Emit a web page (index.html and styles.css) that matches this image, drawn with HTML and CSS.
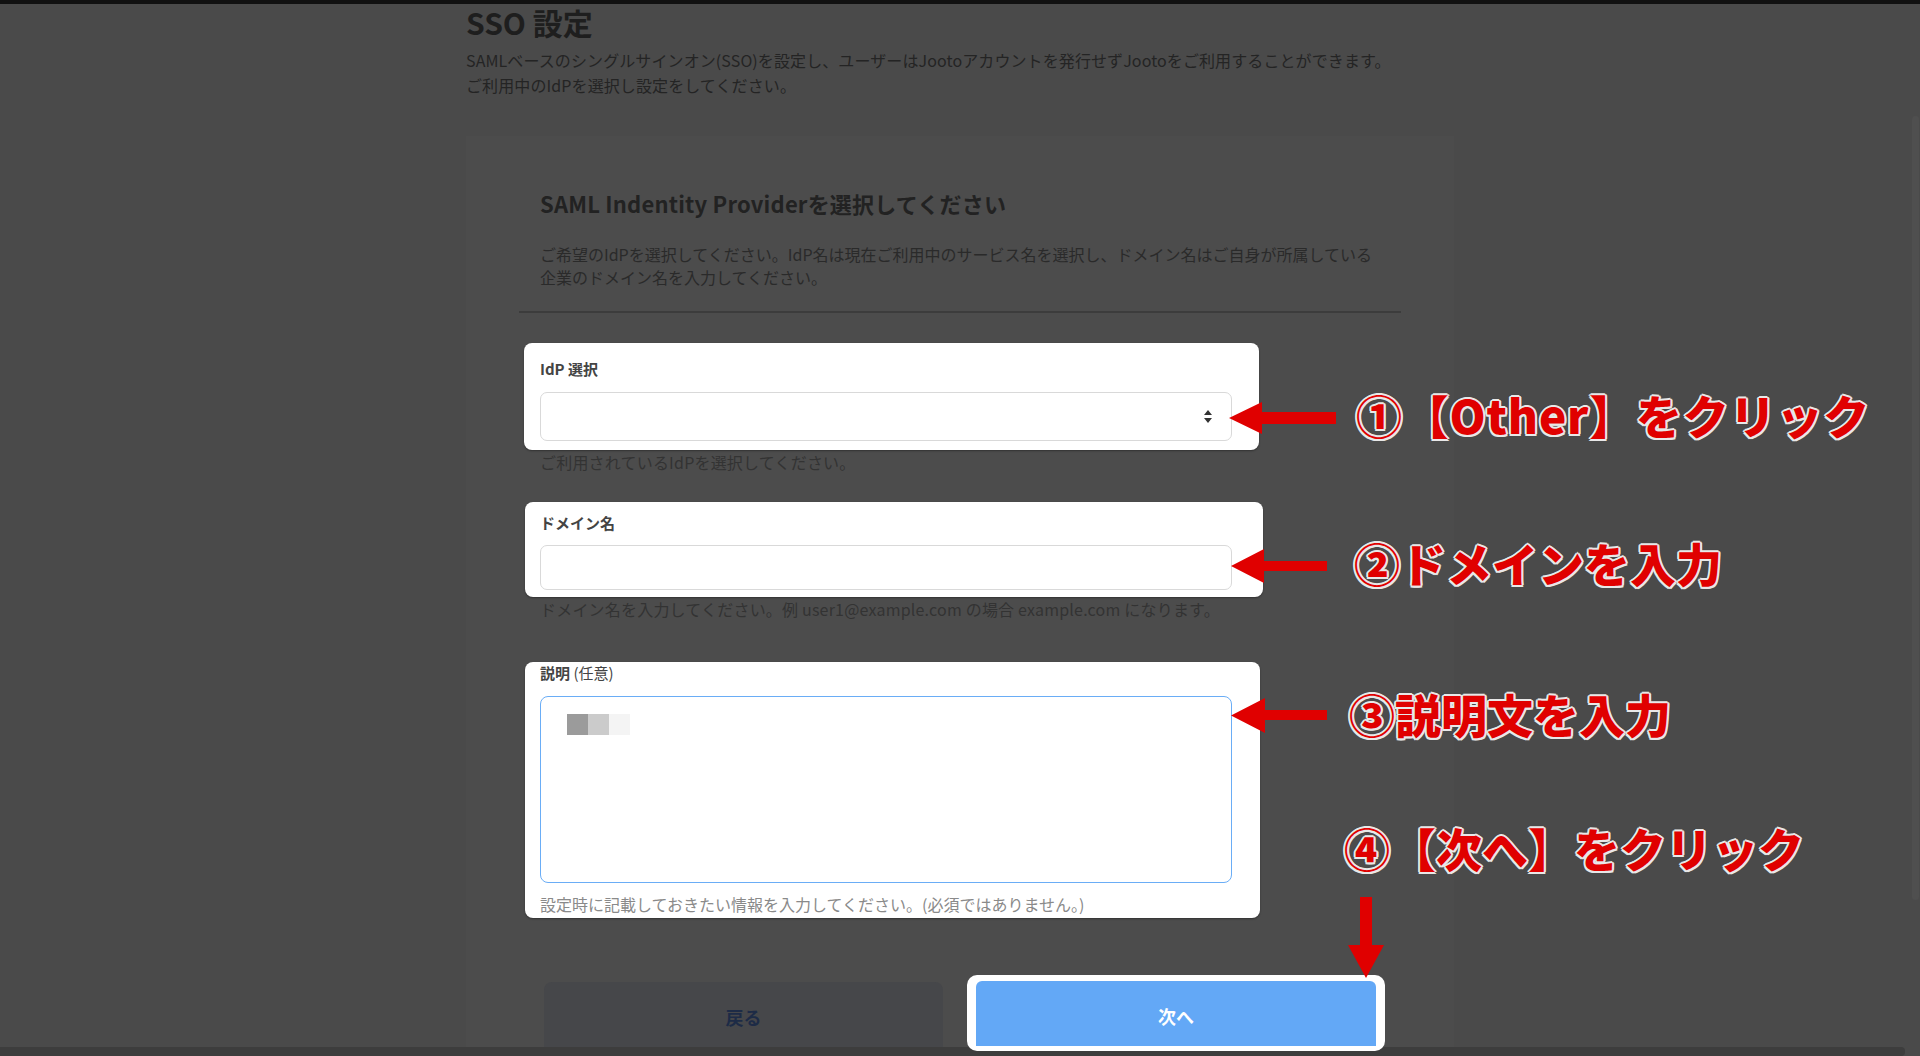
FILE: index.html
```html
<!DOCTYPE html>
<html lang="ja">
<head>
  <meta charset="UTF-8">
  <title>SSO 設定</title>
  <link rel="stylesheet" href="styles.css">
</head>

<body>
  <div class="top-bar"></div>
  <div class="page">
    <h1 class="page-title">SSO 設定</h1>
    <p class="page-desc">SAMLベースのシングルサインオン(SSO)を設定し、ユーザーはJootoアカウントを発行せずJootoをご利用することができます。<br>ご利用中のIdPを選択し設定をしてください。</p>

    <div class="sso-card">
      <div class="sso-head">
        <h2 class="sso-title">SAML Indentity Providerを選択してください</h2>
        <p class="sso-lead">ご希望のIdPを選択してください。IdP名は現在ご利用中のサービス名を選択し、ドメイン名はご自身が所属している<br>企業のドメイン名を入力してください。</p>
      </div>

      <div class="sso-form">
        <div class="field field-idp">
          <div class="spot spot-idp">
            <div class="field-label">IdP 選択</div>
            <div class="input-box select-box">
              <svg class="select-arrow" width="8" height="13" viewBox="0 0 8 13">
                <path d="M0 5 L4 0 L8 5 Z M0 8 L8 8 L4 13 Z" fill="#333"/>
              </svg>
            </div>
          </div>
          <div class="field-hint">ご利用されているIdPを選択してください。</div>
        </div>

        <div class="field field-domain">
          <div class="spot spot-domain">
            <div class="field-label">ドメイン名</div>
            <div class="input-box domain-box"></div>
          </div>
          <div class="field-hint">ドメイン名を入力してください。例 user1@example.com の場合 example.com になります。</div>
        </div>

        <div class="field field-memo">
          <div class="spot spot-memo">
            <div class="field-label">説明 <span class="optional">(任意)</span></div>
            <div class="input-box memo-box">
              <div class="memo-text">
                <span class="blur b1"></span><span class="blur b2"></span><span class="blur b3"></span>
              </div>
            </div>
            <div class="field-hint inner">設定時に記載しておきたい情報を入力してください。(必須ではありません。)</div>
          </div>
        </div>
      </div>

      <div class="sso-actions">
        <div class="btn btn-back">戻る</div>
        <div class="spot-btn">
          <div class="btn btn-next">次へ</div>
        </div>
      </div>
    </div>
  </div>

  <!-- tutorial annotations -->
  <svg class="arrow arrow-1" width="108" height="34" viewBox="0 0 108 34">
    <path d="M0 17 L33 1 L33 11 L107 11 L107 23 L33 23 L33 33 Z" fill="#e00000"/>
  </svg>
  <p class="note note-1">①【Other】をクリック</p>

  <svg class="arrow arrow-2" width="97" height="34" viewBox="0 0 97 34">
    <path d="M0 17 L33 0 L33 12 L96 12 L96 22 L33 22 L33 34 Z" fill="#e00000"/>
  </svg>
  <p class="note note-2">②ドメインを入力</p>

  <svg class="arrow arrow-3" width="96" height="35" viewBox="0 0 96 35">
    <path d="M0 17.5 L34 0 L34 12 L96 12 L96 22 L34 22 L34 35 Z" fill="#e00000"/>
  </svg>
  <p class="note note-3">③説明文を入力</p>

  <p class="note note-4">④【次へ】をクリック</p>
  <svg class="arrow arrow-4" width="36" height="81" viewBox="0 0 36 81">
    <path d="M12 0 L24 0 L24 48 L36 48 L18 81 L0 48 L12 48 Z" fill="#e00000"/>
  </svg>

  <div class="scroll-v"></div>
  <div class="scroll-h"></div>
</body>
</html>
```

FILE: styles.css
```css
html, body {
  margin: 0;
  height: 100%;
}
*,
*::before,
*::after {
  box-sizing: border-box;
}
body {
  position: relative;
  height: 1056px;
  overflow: hidden;
  font-family: "Noto Sans CJK JP", "Noto Sans", sans-serif;
  color: #2a2a2a;
  background: #4a4a4a;
}
.top-bar {
  height: 4px;
  background: #111;
}
.page {
  width: 988px;
  margin: 0 auto;
}
.page-title {
  margin: 0;
  font-size: 30px;
  line-height: 36px;
  font-weight: 700;
  color: #1e1e1e;
}
.page-desc {
  margin: 8px 0 0;
  font-size: 16px;
  line-height: 25px;
  letter-spacing: 0.1px;
  color: #242424;
}

/* 白カード（暗転中） */
.sso-card {
  margin-top: 38px;
  padding: 52px 53px 0;
  height: 960px;
  background: #4c4c4c;
}
.sso-head {
  padding: 0 21px 22px;
  border-bottom: 2px solid #3c3c3c;
}
.sso-title {
  margin: 0;
  font-size: 22px;
  line-height: 30px;
  font-weight: 700;
  letter-spacing: 0.2px;
  color: #222;
}
.sso-lead {
  margin: 25px 0 0;
  font-size: 16px;
  line-height: 23px;
  color: #2a2a2a;
}

.sso-form {
  padding: 30px 21px 0;
}
.field-label {
  font-size: 15px;
  line-height: 22px;
  font-weight: 700;
  color: #444;
}
.field-label .optional {
  font-weight: 400;
}
.field-hint {
  font-size: 16px;
  line-height: 24px;
  letter-spacing: 0.2px;
  color: #333;
}
.field-hint.inner {
  margin-top: 9px;
  letter-spacing: 0;
  color: #8a8a8a;
}

/* ハイライト枠 */
.spot {
  position: relative;
  background: #fff;
  border-radius: 8px;
  box-shadow: 0 1px 2px rgba(0,0,0,.35);
}
.spot-idp {
  width: 735px;
  margin-left: -16px;
  padding: 15px 27px 9px 16px;
}
.field-domain {
  margin-top: 28px;
}
.spot-domain {
  width: 738px;
  margin-left: -15px;
  padding: 10px 31px 7px 15px;
}
.field-memo {
  margin-top: 41px;
}
.spot-memo {
  width: 735px;
  margin-left: -15px;
  padding: 0 28px 2px 15px;
}

.input-box {
  width: 692px;
  margin-top: 11px;
  border: 1px solid #d9d9d9;
  border-radius: 7px;
  background: #fff;
}
.select-box {
  display: flex;
  align-items: center;
  justify-content: flex-end;
  height: 49px;
  margin-top: 12px;
  padding-right: 19px;
}
.domain-box {
  height: 45px;
}
.memo-box {
  height: 187px;
  margin-top: 12px;
  padding: 17px 26px;
  border-color: #6aadf6;
  border-radius: 8px;
}
.memo-text {
  display: flex;
}
.blur {
  width: 21px;
  height: 21px;
}
.blur.b1 { background: #9b9b9b; }
.blur.b2 { background: #cbcbcb; }
.blur.b3 { background: #f4f4f4; }

/* ボタン */
.sso-actions {
  display: flex;
  align-items: flex-start;
  gap: 24px;
  margin-top: 57px;
  padding-left: 25px;
}
.btn {
  border-radius: 8px;
  font-size: 18px;
  font-weight: 700;
  text-align: center;
}
.btn-back {
  width: 399px;
  height: 72px;
  margin-top: 7px;
  line-height: 70px;
  color: #1d2b46;
  background: #46474a;
}
.spot-btn {
  position: relative;
  z-index: 5;
  padding: 6px 9px 5px;
  background: #fff;
  border-radius: 10px;
}
.btn-next {
  width: 400px;
  height: 65px;
  padding-top: 6px;
  line-height: 58px;
  color: #fff;
  background: #63a8f6;
  border-radius: 6px 6px 0 0;
}

/* 注釈 */
.arrow {
  position: absolute;
  z-index: 6;
}
.arrow-1 { left: 1229px; top: 401px; }
.arrow-2 { left: 1231px; top: 549px; }
.arrow-3 { left: 1231px; top: 698px; }
.arrow-4 { left: 1348px; top: 897px; }

.note {
  position: absolute;
  z-index: 6;
  margin: 0;
  font-size: 46px;
  line-height: 46px;
  font-weight: 900;
  white-space: nowrap;
  color: #e00000;
  text-shadow:
    2px 0 #e8e8e8, -2px 0 #e8e8e8, 0 2px #e8e8e8, 0 -2px #e8e8e8,
    1.5px 1.5px #e8e8e8, -1.5px 1.5px #e8e8e8, 1.5px -1.5px #e8e8e8, -1.5px -1.5px #e8e8e8,
    0 0 3px rgba(0,0,0,.35);
}
.note-1 { left: 1356px; top: 391px; letter-spacing: 0.8px; }
.note-2 { left: 1354px; top: 539px; }
.note-3 { left: 1349px; top: 690px; }
.note-4 { left: 1344px; top: 824px; }

.scroll-v {
  position: absolute;
  left: 1912px;
  top: 116px;
  width: 7px;
  height: 784px;
  border-radius: 4px;
  background: #4f4f4f;
}
.scroll-h {
  position: absolute;
  z-index: 3;
  left: 0;
  top: 1047px;
  width: 1905px;
  height: 9px;
  border-radius: 0 4px 4px 0;
  background: #3d3d3d;
}
```
